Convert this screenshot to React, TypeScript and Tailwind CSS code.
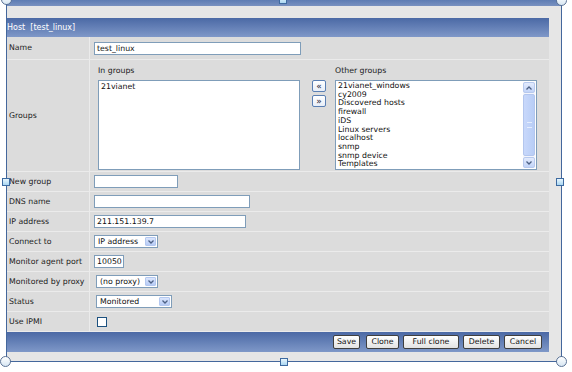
import React from "react";

const font = "font-['DejaVu_Sans',Verdana,sans-serif]";

const otherGroups = [
  "21vianet_windows",
  "cy2009",
  "Discovered hosts",
  "firewall",
  "iDS",
  "Linux servers",
  "localhost",
  "snmp",
  "snmp device",
  "Templates",
];

function TextBox({ value = "", className = "" }: { value?: string; className?: string }) {
  return (
    <div className={`h-[13px] bg-white border border-[#7f9db9] px-[2px] text-[7.8px] leading-[11px] text-[#111] ${className}`}>
      {value}
    </div>
  );
}

function Select({ value, className = "" }: { value: string; className?: string }) {
  return (
    <div className={`h-[13px] bg-white border border-[#7f9db9] flex items-stretch text-[7.8px] leading-[11px] text-[#111] ${className}`}>
      <div className="flex-1 px-[3px] whitespace-nowrap overflow-hidden">{value}</div>
      <div className="w-[11px] m-[1px] rounded-[1px] bg-gradient-to-b from-[#dbe6fd] to-[#b7cbf5] border border-[#b4c8f0] flex items-center justify-center">
        <svg width="6" height="4" viewBox="0 0 6 4">
          <path d="M0.5 0.5 L3 3 L5.5 0.5" fill="none" stroke="#4d6185" strokeWidth="1.3" />
        </svg>
      </div>
    </div>
  );
}

function Row({ label, children, tall = "h-[20px]" }: { label: string; children?: React.ReactNode; tall?: string }) {
  return (
    <div className={`grid grid-cols-[83px_1fr] ${tall} border-b border-[#ebebeb] bg-[#dcdcdc]`}>
      <div className="border-r border-[#ebebeb] pl-[2px] flex items-center text-[7.8px] text-[#222] whitespace-nowrap">{label}</div>
      <div className="pl-[4px] flex items-center">{children}</div>
    </div>
  );
}

function Handle({ kind, className }: { kind: "circle" | "square"; className: string }) {
  return kind === "circle" ? (
    <div className={`absolute w-[11px] h-[11px] rounded-full border border-[#5b7396] bg-gradient-to-b from-[#ffffff] to-[#d7e6f2] ${className}`} />
  ) : (
    <div className={`absolute w-[8px] h-[8px] border border-[#3d6aa0] bg-gradient-to-b from-[#e8f6fd] to-[#a9d6f1] ${className}`} />
  );
}

function Btn({ children, className }: { children: React.ReactNode; className: string }) {
  return (
    <div className={`h-[14px] rounded-[2px] border border-[#3f3f3f] bg-gradient-to-b from-[#ffffff] to-[#e3e3e3] text-[7.8px] leading-[12px] text-center text-[#111] whitespace-nowrap ${className}`}>
      {children}
    </div>
  );
}

function ArrowBtn({ children }: { children: React.ReactNode }) {
  return (
    <div className="w-[14px] h-[12px] rounded-[2px] border border-[#5a7fb3] bg-gradient-to-b from-white to-[#e8eef8] flex items-center justify-center text-[9px] leading-none text-[#223]">
      {children}
    </div>
  );
}

export default function App() {
  return (
    <div className={`relative w-[572px] h-[372px] bg-white overflow-hidden ${font}`}>
      <div className="ml-[6px] w-[556px] h-[362px] border-x border-b border-[#44679c] bg-[#e6e6e6] flex flex-col">
        <div className="h-[6px] bg-gradient-to-b from-[#5d7cb3] to-[#7891c0]" />
        <div className="h-[12px]" />
        <div className="w-[542px]">
          {/* header */}
          <div className="h-[19px] bg-gradient-to-b from-[#4b69a5] to-[#7f98c8] flex items-center text-[8px] text-white whitespace-pre">
            Host  [test_linux]
          </div>

          <Row label="Name" tall="h-[23px]">
            <TextBox value="test_linux" className="w-[207px] mt-[1px]" />
          </Row>

          <Row label="Groups" tall="h-[112px]">
            <div className="flex gap-[12px] self-start pt-[6px] pl-[4px]">
              <div className="flex flex-col">
                <div className="text-[7.8px] text-[#222] h-[14px] leading-[10px]">In groups</div>
                <div className="w-[202px] h-[90px] bg-white border border-[#7f9db9] px-[2px] pt-[2px] text-[7.8px] leading-[8.7px] text-[#111]">
                  21vianet
                </div>
              </div>
              <div className="flex flex-col gap-[3px] pt-[14px]">
                <ArrowBtn>«</ArrowBtn>
                <ArrowBtn>»</ArrowBtn>
              </div>
              <div className="flex flex-col -ml-[3px]">
                <div className="text-[7.8px] text-[#222] h-[14px] leading-[10px]">Other groups</div>
                <div className="w-[202px] h-[90px] bg-white border border-[#7f9db9] flex">
                  <div className="flex-1 px-[2px] pt-[1px] text-[7.8px] leading-[8.7px] text-[#111] whitespace-nowrap">
                    {otherGroups.map((g) => (
                      <div key={g}>{g}</div>
                    ))}
                  </div>
                  <div className="w-[12px] my-[1px] mr-[1px] flex flex-col gap-[1px] bg-[#f3f5fc]">
                    <div className="h-[11px] rounded-[2px] bg-gradient-to-b from-[#e3ebfd] to-[#c2d4f8] border border-[#b7c9ee] flex items-center justify-center">
                      <svg width="6" height="4" viewBox="0 0 6 4">
                        <path d="M0.5 3.5 L3 1 L5.5 3.5" fill="none" stroke="#4d6185" strokeWidth="1.3" />
                      </svg>
                    </div>
                    <div className="flex-1 rounded-[2px] bg-gradient-to-r from-[#c8d8fb] to-[#b8cdf6] border border-[#b3c6ee] flex items-center justify-center">
                      <div className="w-[5px] h-[6px] border-y border-[#e6eefe]" />
                    </div>
                    <div className="h-[11px] rounded-[2px] bg-gradient-to-b from-[#e3ebfd] to-[#c2d4f8] border border-[#b7c9ee] flex items-center justify-center">
                      <svg width="6" height="4" viewBox="0 0 6 4">
                        <path d="M0.5 0.5 L3 3 L5.5 0.5" fill="none" stroke="#4d6185" strokeWidth="1.3" />
                      </svg>
                    </div>
                  </div>
                </div>
              </div>
            </div>
          </Row>

          <Row label="New group">
            <TextBox className="w-[84px]" />
          </Row>
          <Row label="DNS name">
            <TextBox className="w-[156px]" />
          </Row>
          <Row label="IP address">
            <TextBox value="211.151.139.7" className="w-[152px]" />
          </Row>
          <Row label="Connect to">
            <Select value="IP address" className="w-[64px]" />
          </Row>
          <Row label="Monitor agent port">
            <TextBox value="10050" className="w-[30px]" />
          </Row>
          <Row label="Monitored by proxy">
            <Select value="(no proxy)" className="w-[62px] ml-[2px]" />
          </Row>
          <Row label="Status">
            <Select value="Monitored" className="w-[76px] ml-[2px]" />
          </Row>
          <Row label="Use IPMI">
            <div className="w-[10px] h-[10px] ml-[3px] bg-white border border-[#1c5180]" />
          </Row>

          {/* footer */}
          <div className="h-[20px] bg-gradient-to-b from-[#4b69a5] to-[#7f98c8] flex items-center justify-end gap-[4px] pr-[7px]">
            <Btn className="w-[27px] mr-[2px]">Save</Btn>
            <Btn className="w-[33px]">Clone</Btn>
            <Btn className="w-[56px]">Full clone</Btn>
            <Btn className="w-[37px]">Delete</Btn>
            <Btn className="w-[38px]">Cancel</Btn>
          </div>
        </div>
      </div>

      <Handle kind="circle" className="left-[1px] -top-[6px]" />
      <Handle kind="square" className="left-[279px] -top-[4px]" />
      <Handle kind="circle" className="left-[556px] -top-[5px]" />
      <Handle kind="square" className="left-[2px] top-[178px]" />
      <Handle kind="square" className="left-[556px] top-[178px]" />
      <Handle kind="circle" className="left-[0px] top-[356px]" />
      <Handle kind="square" className="left-[280px] top-[358px]" />
      <Handle kind="circle" className="left-[556px] top-[356px]" />
    </div>
  );
}
